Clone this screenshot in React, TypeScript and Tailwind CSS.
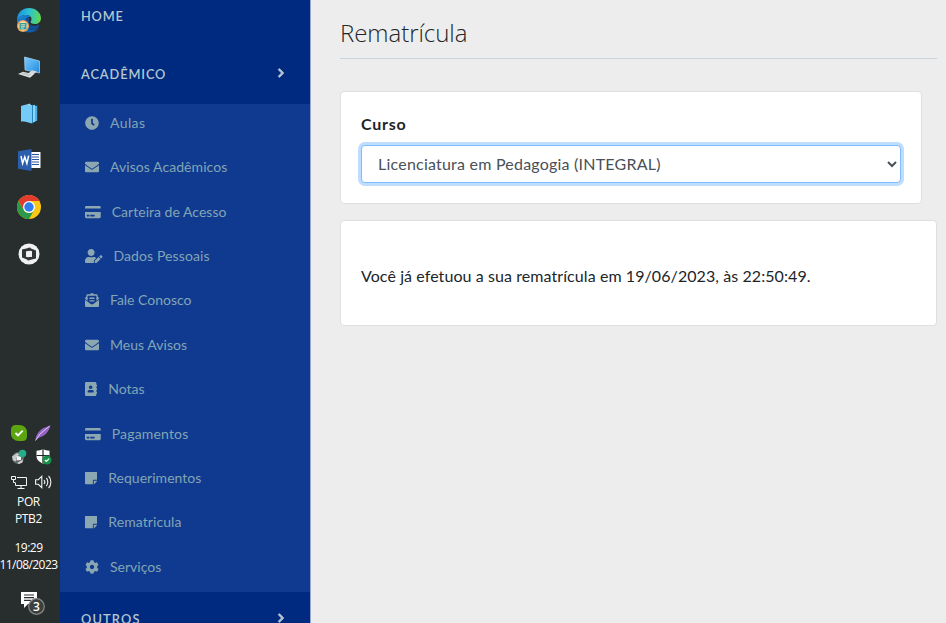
import React from "react";
import type { IconType } from "react-icons";
import {
  FaAddressBook,
  FaChevronRight,
  FaClock,
  FaCog,
  FaCreditCard,
  FaEnvelope,
  FaEnvelopeOpenText,
  FaStickyNote,
  FaUserEdit,
} from "react-icons/fa";

type Item = { label: string; icon: IconType; width: string; tracking: string };

const items: Item[] = [
  { label: "Aulas", icon: FaClock, width: "w-[14px]", tracking: "tracking-[0.4px]" },
  { label: "Avisos Acadêmicos", icon: FaEnvelope, width: "w-[14px]", tracking: "tracking-[0.06px]" },
  { label: "Carteira de Acesso", icon: FaCreditCard, width: "w-[15.75px]", tracking: "tracking-[0.02px]" },
  { label: "Dados Pessoais", icon: FaUserEdit, width: "w-[17.5px]", tracking: "tracking-[0.1px]" },
  { label: "Fale Conosco", icon: FaEnvelopeOpenText, width: "w-[14px]", tracking: "tracking-[-0.02px]" },
  { label: "Meus Avisos", icon: FaEnvelope, width: "w-[14px]", tracking: "tracking-[0.04px]" },
  { label: "Notas", icon: FaAddressBook, width: "w-[12.25px]", tracking: "tracking-[0.01px]" },
  { label: "Pagamentos", icon: FaCreditCard, width: "w-[15.75px]", tracking: "tracking-[0.17px]" },
  { label: "Requerimentos", icon: FaStickyNote, width: "w-[12.25px]", tracking: "tracking-[0.02px]" },
  { label: "Rematricula", icon: FaStickyNote, width: "w-[12.25px]", tracking: "tracking-[0.09px]" },
  { label: "Serviços", icon: FaCog, width: "w-[14px]", tracking: "tracking-[0.02px]" },
];

function EdgeIcon() {
  return (
    <svg className="size-[26px]" viewBox="0 0 26 26">
      <defs>
        <linearGradient id="edgeTop" x1="0" y1="0.4" x2="1" y2="0.5">
          <stop offset="0" stopColor="#1d8fdc" />
          <stop offset="0.5" stopColor="#2cc3d2" />
          <stop offset="1" stopColor="#63d94c" />
        </linearGradient>
        <linearGradient id="edgeLow" x1="0" y1="0" x2="1" y2="1">
          <stop offset="0" stopColor="#1b8ad9" />
          <stop offset="1" stopColor="#0c4f9e" />
        </linearGradient>
      </defs>
      <path d="M1 13C1 5 7 1 13 1c7 0 12 5 12 10 0 4-3 6-6 6-2.500 0-4.500-.8-4.500-2 0-.7 1-1.200 1-3 0-2.500-2.500-4-5.500-4-4 0-7.500 2-9 5z" fill="url(#edgeTop)" />
      <path d="M1 13c1.500-3.500 5-5 9-5 2 0 3.500.6 4.500 1.800C11 10 9 12.500 9 15.500 9 20 13 23 17 23c2.500 0 4.500-1 6-2-2 2.800-5.500 4.500-9.500 4.500C6 25.500 1 20 1 13z" fill="url(#edgeLow)" />
      <path d="M9 15.500c0-2.500 1.500-4.500 4-5 .8 1 .6 2.500 0 3.500-1.200 4 5 6.500 10.500 3.500-.3 3-3.500 5.500-6.500 5.500-4.500 0-8-3-8-7.500z" fill="#124f94" />
      <circle cx="7" cy="19" r="6" fill="#f2a04c" />
      <circle cx="7" cy="19" r="4.700" fill="#f7ddb0" />
      <path d="M3.500 16h7v6.500h-7z" fill="#3a9a94" />
      <path d="M5 17.700h4M5 19.300h4M5 21h3" stroke="#e9f3df" strokeWidth=".8" />
    </svg>
  );
}

function ComputerIcon() {
  return (
    <svg className="size-[24px]" viewBox="0 0 24 24">
      <defs>
        <linearGradient id="screen" x1="0" y1="0" x2="1" y2="1">
          <stop offset="0" stopColor="#7cc9fa" />
          <stop offset="0.55" stopColor="#4aa9ef" />
          <stop offset="1" stopColor="#2288dc" />
        </linearGradient>
      </defs>
      <path d="M7.500 1 22.500 5v12L8 14z" fill="url(#screen)" stroke="#a9d8f5" strokeWidth=".7" />
      <path d="m15 14.300 5 1.200-4 3.200-5-1.300z" fill="#d5d9db" />
      <path d="m1 18 5-2.300 11 2.600-4 3.400z" fill="#e1e3e4" />
      <path d="m4 17.500 8.500 2.200M6 16.800l8 2" stroke="#a8acad" strokeWidth=".6" />
    </svg>
  );
}

function BooksIcon() {
  return (
    <svg className="h-[21px] w-[18px]" viewBox="0 0 18 21">
      <path d="M1 3 10 .5V18l-9 .5z" fill="#7fd0f8" />
      <path d="M1 3 12 2v18.500L1 17.500z" fill="#74cbf7" />
      <path d="m12 2 1.200-.5V20l-1.200.5z" fill="#2585bf" />
      <path d="m13 2.500 2-.7v17l-2 .7z" fill="#8bd5fa" />
      <path d="m15 3 2.200-.6v15.400l-2.200.8z" fill="#4fb0e6" />
      <path d="M10 1v2" stroke="#c4ecff" strokeWidth=".8" />
    </svg>
  );
}

function WordIcon() {
  return (
    <svg className="h-[22px] w-[23px]" viewBox="0 0 23 22">
      <path d="M12 3h10.500v16H12z" fill="#fff" />
      <path d="M14 5.500h7M14 8h7M14 10.500h7M14 13h7M14 15.500h7" stroke="#2b579a" strokeWidth="1.100" />
      <path d="M0 2.300 13.500 0v22L0 19.700z" fill="#2b5eac" />
      <path d="m3 7 1.600 7.500L6.800 8l2.100 6.500 1.800-7.800" fill="none" stroke="#fff" strokeWidth="1.500" />
    </svg>
  );
}

function ChromeIcon() {
  return (
    <svg className="size-[24px]" viewBox="0 0 24 24">
      <circle cx="12" cy="12" r="12" fill="#fbc815" />
      <path d="M1.600 6 6.800 15A6 6 0 0 0 17.200 15L12 24A12 12 0 0 1 1.600 6z" fill="#2a9a48" />
      <path d="M12 6h10.400A12 12 0 0 0 1.600 6l5.200 9z" fill="#e33b2e" />
      <circle cx="12" cy="12" r="6" fill="#fff" />
      <circle cx="12" cy="12" r="4.700" fill="#2f7df0" />
    </svg>
  );
}

function RoundIcon() {
  return (
    <svg className="size-[22px]" viewBox="0 0 22 22">
      <circle cx="11" cy="11" r="10.500" fill="#f1f1f1" />
      <path d="M4 6.500 12.500 4.500v3L8 8.500v5.300l3.500 1.200v2.500L4 14.500z" fill="#303535" />
      <path d="M18 15.500 9.500 17.500v-3l4.500-1V8.200L10.500 7V4.500L18 7.500z" fill="#303535" />
      <path d="m8 8.500 6 1v4.500l-6-1z" fill="#f1f1f1" />
    </svg>
  );
}

function Tray() {
  return (
    <div className="grid grid-cols-[24px_24px] justify-center">
      <div className="flex h-[24px] items-center justify-center">
        <svg className="size-[16px]" viewBox="0 0 16 16">
          <path d="M4.500 0h4C12.500 0 16 3 16 7v4.500c0 3-2 4.500-4.500 4.500h-4C3.500 16 0 13 0 9V4.500C0 1.500 2 0 4.500 0z" fill="#5da510" />
          <path d="m4.500 8 2.500 2.500 4.700-4.800" fill="none" stroke="#fff" strokeWidth="1.800" />
        </svg>
      </div>
      <div className="flex h-[24px] items-center justify-center">
        <svg className="size-[16px]" viewBox="0 0 16 16">
          <path d="M.5 15.500C.5 11 3.500 6 8 3.300L15.500.5C14.500 5 11.500 9 8 11l-4.500 2z" fill="#9565c5" />
          <path d="M.5 15.500 5 9l9.500-8" fill="none" stroke="#dfc3f4" strokeWidth="1" />
        </svg>
      </div>
      <div className="flex h-[23px] items-center justify-center">
        <svg className="size-[16px]" viewBox="0 0 16 16">
          <circle cx="7" cy="9" r="6" fill="#5c6462" />
          <path d="M1 7.500 6 4l3 1-4 3.500v4l-3-1z" fill="#c5cac8" />
          <path d="m5.500 7 4.500.5v3.500l-4.500.5z" fill="#f5f5f5" />
          <path d="m6 14 6-3.500-.5 3-3.500 1.500z" fill="#cfd2d1" />
          <circle cx="11.500" cy="4.500" r="3.800" fill="#22ad8d" />
        </svg>
      </div>
      <div className="flex h-[23px] items-center justify-center">
        <svg className="size-[17px]" viewBox="0 0 17 17">
          <path d="M8 1c2 1.200 4 1.700 6.500 1.700V8c0 4-3 6-6.500 7.500C4.500 14 1.500 12 1.500 8V2.700C4 2.700 6 2.200 8 1z" fill="#fff" />
          <path d="M8 1v14M1.500 7.500h13" stroke="#202625" strokeWidth="1.200" />
          <circle cx="12" cy="12" r="4.500" fill="#169047" />
          <path d="m9.900 12 1.500 1.500 2.700-2.800" fill="none" stroke="#fff" strokeWidth="1.200" />
        </svg>
      </div>
      <div className="flex h-[27px] items-center justify-center">
        <svg className="h-[14px] w-[16px]" viewBox="0 0 16 14" fill="none" stroke="#f4f4f4" strokeWidth="1">
          <path d="M6 2.500h9.500v8h-11V8M10 10.500v2.500M6.500 13.500h7" />
          <path d="M.5 1.500h4v3h-4zM2.500 4.500v3h2" />
        </svg>
      </div>
      <div className="flex h-[27px] items-center justify-center">
        <svg className="h-[14px] w-[17px]" viewBox="0 0 17 14" fill="none" stroke="#f4f4f4" strokeWidth="1.100">
          <path d="M.6 4.700h2.700L6.800 1.300v11.400L3.300 9.300H.6z" />
          <path d="M9 5c.9 1 .9 3 0 4M11.300 3c2 2 2 6 0 8M13.600 1c3 3 3 9 0 12" />
        </svg>
      </div>
    </div>
  );
}

function Taskbar() {
  return (
    <aside className="flex h-full w-[60px] shrink-0 flex-col bg-[#282d2d] text-white">
      <div className="flex h-[278px] shrink-0 flex-col items-center pr-[2px]">
        <div className="flex h-[43px] items-center pb-[3px]"><EdgeIcon /></div>
        <div className="flex h-[47px] items-center pt-[2px]"><ComputerIcon /></div>
        <div className="flex h-[47px] items-center"><BooksIcon /></div>
        <div className="flex h-[47px] items-center pb-[2px]"><WordIcon /></div>
        <div className="flex h-[47px] items-center pb-[2px]"><ChromeIcon /></div>
        <div className="flex h-[47px] items-center pb-[2px]"><RoundIcon /></div>
      </div>
      <div className="mt-[143px] pl-[2px]">
        <Tray />
      </div>
      <div className="-ml-[3px] flex flex-col items-center whitespace-nowrap text-[12px] leading-[17px] [font-family:'Open_Sans',sans-serif]">
        <span className="-mt-[2px] tracking-[-0.4px]">POR</span>
        <span className="tracking-[-0.3px]">PTB2</span>
        <span className="mt-[12px] tracking-[-0.5px]">19:29</span>
        <span className="tracking-[-0.58px]">11/08/2023</span>
      </div>
      <div className="ml-[20px] mt-[18px]">
        <svg className="h-[25px] w-[26px]" viewBox="0 0 26 25">
          <path d="M1 1h16v12H8l-4 4v-4H1z" fill="#fff" />
          <path d="M4 4h10M4 6.700h10M4 9.400h7" stroke="#282d2d" strokeWidth="1.200" />
          <circle cx="16.500" cy="15.500" r="7.800" fill="#3b3f3f" stroke="#85898a" strokeWidth="1.200" />
          <text x="16.500" y="19.800" textAnchor="middle" fill="#fff" fontSize="12" fontFamily="Open Sans, sans-serif" fontWeight="600">3</text>
        </svg>
      </div>
    </aside>
  );
}

function Sidebar() {
  return (
    <nav className="flex h-full w-[251px] shrink-0 flex-col overflow-hidden border-r border-[#9aa8d0] bg-[#002a80] text-[#b5c8cf]">
      <div className="h-[46px] shrink-0 pl-[21px] pt-[6px] text-[12.8px] font-semibold leading-[20px] tracking-[0.8px]">HOME</div>
      <div className="flex h-[58px] shrink-0 items-start justify-between pl-[21px] pr-[25px] pt-[18px] text-[12.8px] font-semibold leading-[20px]">
        <span className="tracking-[0.9px]">ACADÊMICO</span>
        <FaChevronRight className="mt-[4px] h-[10px] w-[8px]" stroke="currentColor" strokeWidth={50} />
      </div>
      <ul className="shrink-0 bg-[#103a8f] text-[14px] font-normal leading-[20px] text-[#82a5b5]">
        {items.map(({ label, icon: Icon, width, tracking }) => (
          <li key={label} className="flex h-[44.375px] items-center pb-[6.5px] pl-[25px]">
            <Icon className={`h-[14px] shrink-0 text-[#8ba7b1] ${width}`} />
            <span className={`ml-[11px] whitespace-nowrap ${tracking}`}>{label}</span>
          </li>
        ))}
      </ul>
      <div className="flex h-[31px] shrink-0 items-start justify-between pl-[21px] pr-[25px] pt-[17px] text-[12.8px] font-semibold leading-[20px]">
        <span className="tracking-[1.16px]">OUTROS</span>
        <FaChevronRight className="mt-[4px] h-[10px] w-[8px]" stroke="currentColor" strokeWidth={50} />
      </div>
    </nav>
  );
}

export default function App() {
  return (
    <div className="flex h-[623px] w-[946px] overflow-hidden bg-[#ededed] font-normal [font-family:Lato,sans-serif]">
      <Taskbar />
      <Sidebar />
      <main className="min-w-0 flex-1 pl-[29px] pr-[9px] text-[#212529]">
        <h1 className="h-[59px] border-b border-[#c8d3dc] pt-[18px] text-[24px] font-light leading-[29px] tracking-[-0.05px] [font-family:'Open_Sans',sans-serif]">Rematrícula</h1>
        <section className="mr-[15px] mt-[32px] h-[113px] rounded-[4px] border border-[#dfdfdf] bg-white px-[20px] pt-[19px]">
          <label htmlFor="curso" className="block h-[34px] text-[16px] font-bold leading-[26px] tracking-[0.75px]">Curso</label>
          <select
            id="curso"
            className="h-[38px] w-full rounded-[4px] border border-[#80bdff] bg-white pl-[12px] pr-[11px] pb-[2px] text-[16px] tracking-[0.22px] text-[#495057] shadow-[0_0_0_3px_#bfdeff] outline-none"
          >
            <option>Licenciatura em Pedagogia (INTEGRAL)</option>
          </select>
        </section>
        <section className="mt-[16px] flex h-[106px] items-center rounded-[4px] border border-[#dfdfdf] bg-white px-[20px] pt-[6px]">
          <p className="text-[16px] leading-[26px] tracking-[0.08px]">Você já efetuou a sua rematrícula em 19/06/2023, às 22:50:49.</p>
        </section>
      </main>
    </div>
  );
}
